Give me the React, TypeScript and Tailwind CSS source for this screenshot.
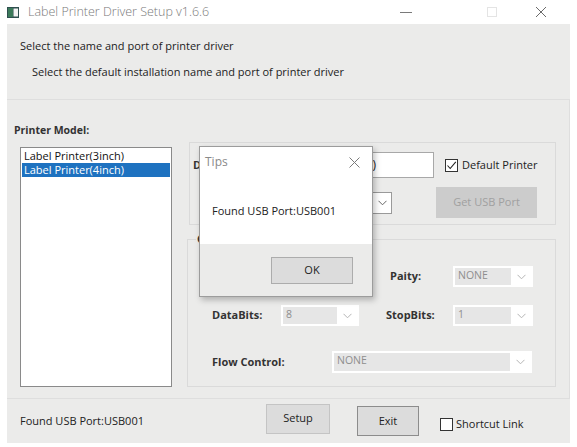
import React from 'react';

const Chevron = ({ color = '#9a9a9a' }: { color?: string }) => (
  <svg width="9" height="6" viewBox="0 0 9 6" fill="none">
    <polyline points="0.5,0.8 4.5,4.8 8.5,0.8" stroke={color} strokeWidth="1" />
  </svg>
);

const DisabledCombo = ({ value, width, height }: { value: string; width: string; height: string }) => (
  <div className={`${width} ${height} flex border-2 border-white bg-white`}>
    <div className="flex-1 bg-[#e6e6e6] pl-[3px] text-[#8e8e8e] leading-[15px] text-[10.5px]">{value}</div>
    <div className="w-[20px] flex items-center justify-center">
      <Chevron color="#b5b5b5" />
    </div>
  </div>
);

const Checkbox = ({ checked }: { checked?: boolean }) => (
  <div className="w-[13px] h-[13px] border border-[#333] bg-white flex items-center justify-center">
    {checked && (
      <svg width="11" height="11" viewBox="0 0 11 11" fill="none">
        <polyline points="1.5,5.5 4.2,8.5 9.8,1.8" stroke="#222" strokeWidth="1.1" />
      </svg>
    )}
  </div>
);

export default function App() {
  return (
    <div className="w-[577px] h-[447px] bg-white relative overflow-hidden font-['Open_Sans',sans-serif] text-[11px] text-[#222] whitespace-nowrap">
      {/* title bar */}
      <div className="h-[24px] flex items-center pl-[7px] pr-[30px]">
        <svg width="12" height="11" viewBox="0 0 12 11">
          <rect x="0" y="0" width="12" height="11" fill="#2f4f4f" />
          <rect x="1" y="1" width="5" height="9" fill="#3c7a5a" />
          <rect x="6.5" y="1.5" width="4.5" height="8" fill="#f4f4f4" />
        </svg>
        <span className="ml-[9px] text-[12.5px] text-[#7a7a7a] font-light">Label Printer Driver Setup v1.6.6</span>
        <div className="ml-auto flex items-center">
          <div className="w-[12px] h-px bg-[#7a7a7a]" />
          <div className="ml-[75px] w-[10px] h-[10px] border border-[#e4e4e4]" />
          <svg className="ml-[38px]" width="12" height="12" viewBox="0 0 12 12">
            <path d="M1 1 L11 11 M11 1 L1 11" stroke="#6a6a6a" strokeWidth="1" />
          </svg>
        </div>
      </div>

      <div className="mx-[7px] h-[419px] bg-[#ebebea] flex flex-col">
        {/* header */}
        <div className="h-[76px] border-b border-[#dedede] flex flex-col">
          <div className="pl-[13px] mt-[14px] leading-[16px]">Select the name and port of printer driver</div>
          <div className="pl-[25px] mt-[10px] leading-[16px]">Select the default installation name and port of printer driver</div>
        </div>

        {/* middle */}
        <div className="h-[299px] border-b border-r border-[#dedede] flex">
          <div className="w-[180px] pl-[7px] pt-[22px]">
            <div className="font-bold text-[#333] leading-[16px] text-[10.5px]">Printer Model:</div>
            <div className="ml-[6px] mt-[9px] w-[152px] h-[240px] bg-white border border-[#8a8a8a] p-px leading-[14px]">
              <div className="pl-[2px] h-[14px] text-[#111]">Label Printer(3inch)</div>
              <div className="pl-[2px] h-[14px] bg-[#1e72c0] text-white">Label Printer(4inch)</div>
            </div>
          </div>

          <div className="flex-1 pt-[42px]">
            {/* group 1 */}
            <div className="ml-[2px] w-[367px] h-[83px] border border-[#dadada] flex flex-col pl-[3px]">
              <div className="mt-[9px] h-[26px] flex items-center">
                <div className="w-[69px] font-bold text-[#333]">Driver Name:</div>
                <div className="w-[172px] h-[26px] bg-white border border-[#a8a8a8] flex items-center pl-[4px] text-[12px] text-[#222]">Label Printer(4inch)</div>
                <div className="ml-[11px]"><Checkbox checked /></div>
                <span className="ml-[4px] text-[#222]">Default Printer</span>
              </div>
              <div className="mt-[9px] h-[31px] flex items-center">
                <div className="w-[69px]" />
                <div className="w-[130px] h-[22px] bg-white border border-[#9a9a9a] flex items-center justify-end">
                  <div className="w-[18px] flex justify-center"><Chevron color="#666" /></div>
                </div>
                <div className="ml-[44px] w-[101px] h-[31px] bg-[#cccccc] flex items-center justify-center text-[#a0a0a0]">Get USB Port</div>
              </div>
            </div>

            {/* group 2 */}
            <fieldset className="mt-[8px] w-[369px] h-[154px] border border-[#dadada] pl-[24px]">
              <legend className="-ml-[16px] px-[1px] font-bold text-[#333] leading-[12px]">COM Setting</legend>
              <div className="mt-[21px] h-[21px] flex items-center">
                <div className="w-[69px]" />
                <div className="w-[78px] h-[21px]" />
                <div className="ml-[31px] w-[63px] font-bold text-[#333]">Paity:</div>
                <DisabledCombo value="NONE" width="w-[80px]" height="h-[21px]" />
              </div>
              <div className="mt-[18px] h-[21px] flex items-center">
                <div className="w-[69px] font-bold text-[#333]">DataBits:</div>
                <DisabledCombo value="8" width="w-[78px]" height="h-[21px]" />
                <div className="ml-[27px] w-[67px] font-bold text-[#333]">StopBits:</div>
                <DisabledCombo value="1" width="w-[80px]" height="h-[21px]" />
              </div>
              <div className="mt-[25px] h-[22px] flex items-center">
                <div className="w-[120px] font-bold text-[#333]">Flow Control:</div>
                <DisabledCombo value="NONE" width="w-[200px]" height="h-[22px]" />
              </div>
            </fieldset>
          </div>
        </div>

        {/* footer */}
        <div className="flex-1 flex items-center pl-[13px]">
          <span className="w-[246px]">Found USB Port:USB001</span>
          <div className="w-[64px] h-[30px] mb-[5px] bg-[#dcdcdc] border border-[#c4c4c4] flex items-center justify-center">Setup</div>
          <div className="ml-[27px] w-[62px] h-[30px] bg-[#dcdcdc] border border-[#8c8c8c] flex items-center justify-center">Exit</div>
          <div className="ml-[21px] mt-[7px] flex items-center">
            <Checkbox />
            <span className="ml-[3px]">Shortcut Link</span>
          </div>
        </div>
      </div>

      {/* Tips dialog */}
      <div className="absolute left-[199px] top-[146px] w-[174px] h-[151px] border border-[#9c9c9c] bg-white shadow-[2px_3px_6px_rgba(0,0,0,0.25)] flex flex-col">
        <div className="h-[97px] flex flex-col">
          <div className="h-[30px] flex items-center pl-[5px] pr-[12px]">
            <span className="text-[12px] text-[#8a8a8a]">Tips</span>
            <svg className="ml-auto" width="11" height="11" viewBox="0 0 11 11">
              <path d="M0.5 0.5 L10.5 10.5 M10.5 0.5 L0.5 10.5" stroke="#7a7a7a" strokeWidth="1" />
            </svg>
          </div>
          <div className="mt-[26px] pl-[12px] text-[#222]">Found USB Port:USB001</div>
        </div>
        <div className="flex-1 bg-[#ebebea] flex items-start justify-end pr-[19px] pt-[13px]">
          <div className="w-[82px] h-[27px] bg-[#dcdcdc] border border-[#acacac] flex items-center justify-center">OK</div>
        </div>
      </div>
    </div>
  );
}
